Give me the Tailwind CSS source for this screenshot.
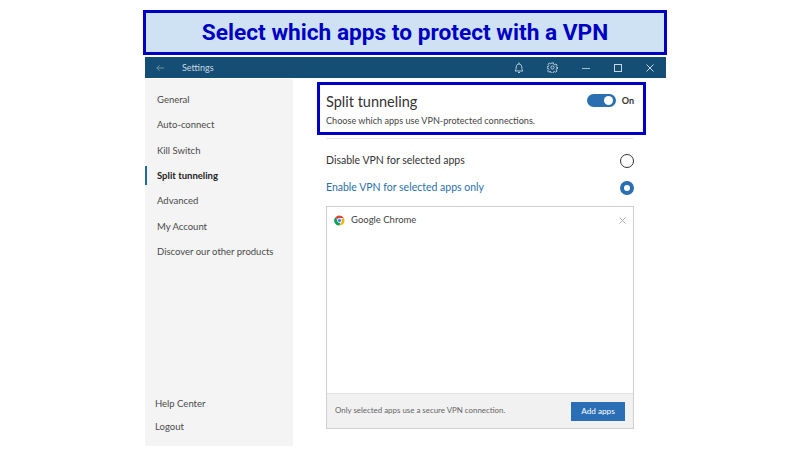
<!DOCTYPE html>
<html lang="en">
  <head>
    <meta charset="UTF-8" />
    <title>Split tunneling settings</title>
    <script src="https://cdn.jsdelivr.net/npm/@tailwindcss/browser@4"></script>
  </head>
  <body class="bg-white w-[806px] h-[453px] overflow-hidden font-['Lato',sans-serif]">
    <div class="w-[524px] ml-[143px] pt-[10px] pb-[2px]">
      <!-- Banner -->
      <div class="h-[45px] border-[3px] border-[#0000c4] bg-[#cfe2f3] pt-[1px] flex items-center justify-center font-['Roboto',sans-serif] font-bold text-[22.700px] text-[#0000c4]">
        Select which apps to protect with a VPN
      </div>
    </div>

    <div class="w-[521px] ml-[145px]">
      <!-- Title bar -->
      <div class="h-[21px] bg-[#154e74] flex items-center text-[#c9d8e2] pl-[11px]">
        <svg class="w-[8px] h-[8px]" viewBox="0 0 10 10" fill="none" stroke="#7fa3b9" stroke-width="1"><path d="M10 5H1M4.500 1.500 1 5l3.500 3.500" /></svg>
        <span class="ml-[18px] text-[9px]">Settings</span>
        <div class="ml-auto flex items-center">
          <svg class="w-[10px] h-[12px]" viewBox="0 0 10 12" fill="none" stroke="#c9d8e2" stroke-width="0.9"><path d="M1 9h8C8 8 7.800 7 7.800 5 7.800 3.300 6.600 2 5 2S2.200 3.300 2.200 5C2.200 7 2 8 1 9ZM4 10.500h2M5 .5V2" /></svg>
          <svg class="w-[11px] h-[11px] ml-[23px]" viewBox="0 0 24 24" fill="none" stroke="#c9d8e2" stroke-width="2"><circle cx="12" cy="12" r="3.500" /><path d="M10 2h4l.6 3 2.300 1 2.600-1.700 2.800 2.800L20 9.700l1 2.300 3 .6v-1.200 2.600l-3 .6-1 2.300 1.700 2.600-2.800 2.800-2.600-1.700-2.300 1-.6 3h-4l-.6-3-2.300-1-2.600 1.700-2.800-2.800L4 16.500l-1-2.300-3-.6v-3.200l3-.6 1-2.300-1.700-2.600 2.800-2.800 2.600 1.700 2.300-1z" /></svg>
          <svg class="w-[8px] h-[8px] ml-[24px]" viewBox="0 0 8 8" stroke="#a9c0cf"><path d="M0 4.500h8" /></svg>
          <svg class="w-[8px] h-[8px] ml-[24px]" viewBox="0 0 8 8" fill="none" stroke="#c9d8e2"><rect x=".5" y=".5" width="7" height="7" /></svg>
          <svg class="w-[8px] h-[8px] ml-[24px] mr-[12px]" viewBox="0 0 8 8" stroke="#c9d8e2"><path d="M.5.5l7 7M7.500.5l-7 7" /></svg>
        </div>
      </div>

      <div class="flex h-[368px]">
        <!-- Sidebar -->
        <aside class="w-[148px] mt-[1px] bg-[#f4f4f4] flex flex-col text-[9.500px] text-[#4a4a4a]">
          <nav class="pt-[8.500px] flex flex-col">
            <a class="h-[25.300px] pl-[12px] flex items-center">General</a>
            <a class="h-[25.300px] pl-[12px] flex items-center">Auto-connect</a>
            <a class="h-[25.300px] pl-[12px] flex items-center">Kill Switch</a>
            <a class="h-[25.300px] pl-[12px] flex items-center font-bold text-[#222] relative">
              <span class="absolute left-0 top-[3px] w-[2px] h-[19px] bg-[#1b6a99]"></span>
              Split tunneling
            </a>
            <a class="h-[25.300px] pl-[12px] flex items-center">Advanced</a>
            <a class="h-[25.300px] pl-[12px] flex items-center">My Account</a>
            <a class="h-[25.300px] pl-[12px] flex items-center">Discover our other products</a>
          </nav>
          <div class="mt-auto pb-[7px] flex flex-col">
            <a class="h-[23px] pl-[10px] flex items-center">Help Center</a>
            <a class="h-[23px] pl-[10px] flex items-center">Logout</a>
          </div>
        </aside>

        <!-- Main pane -->
        <main class="flex-1 pl-[24px] pr-[20px] relative">
          <div class="h-[53px] w-[329px] mt-[4px] border-[3px] border-[#0000c4] pl-[6px] pt-[7px] relative">
            <div class="text-[14.500px] leading-[20px] text-[#333]">Split tunneling</div>
            <div class="text-[9.100px] leading-[13px] mt-[2px] text-[#444]">Choose which apps use VPN-protected connections.</div>
            <div class="absolute top-[9px] right-[9px] flex items-center">
              <span class="w-[29px] h-[13px] rounded-full bg-[#2a6fb0] flex items-center justify-end pr-[3px]">
                <span class="w-[9px] h-[9px] rounded-full bg-white"></span>
              </span>
              <span class="ml-[6px] text-[9px] font-bold text-[#333]">On</span>
            </div>
          </div>

          <div class="ml-[9px] w-[307px] mt-[3px] border-t border-[#e4e4e4]"></div>

          <div class="ml-[9px] w-[308px] mt-[12px] h-[20px] flex items-center justify-between text-[10.500px] text-[#333]">
            <span>Disable VPN for selected apps</span>
            <span class="w-[14px] h-[14px] rounded-full border-[1.500px] border-[#333]"></span>
          </div>
          <div class="ml-[9px] w-[308px] mt-[7px] h-[20px] flex items-center justify-between text-[10.500px] text-[#2a6fa8]">
            <span>Enable VPN for selected apps only</span>
            <span class="w-[14px] h-[14px] rounded-full border-[4px] border-[#2a6fb0]"></span>
          </div>

          <!-- App list -->
          <div class="ml-[9px] w-[308px] h-[223px] mt-[8px] border border-[#cfcfcf] flex flex-col">
            <div class="flex-1 pl-[7px] pr-[7px] pt-[6px]">
              <div class="flex items-center h-[14px] text-[9.500px] text-[#444]">
                <svg class="w-[11px] h-[11px]" viewBox="0 0 24 24">
                  <path fill="#db4437" d="M12 1a11 11 0 0 1 9.500 5.500H12a5.500 5.500 0 0 0-5.200 3.700L3.200 4.700A11 11 0 0 1 12 1Z" />
                  <path fill="#f4b400" d="M21.500 6.500A11 11 0 0 1 12 23l4.700-8.200A5.500 5.500 0 0 0 16.500 8.500Z" />
                  <path fill="#0f9d58" d="M3.200 4.700 8 13a5.500 5.500 0 0 0 5.700 4.300L12 23A11 11 0 0 1 3.200 4.700Z" />
                  <circle cx="12" cy="12" r="4.500" fill="#4285f4" stroke="#fff" stroke-width="1.500" />
                </svg>
                <span class="ml-[6px]">Google Chrome</span>
                <svg class="w-[7px] h-[7px] ml-auto" viewBox="0 0 8 8" stroke="#aaa"><path d="M.5.5l7 7M7.500.5l-7 7" /></svg>
              </div>
            </div>
            <div class="h-[35px] bg-[#f1f1f1] border-t border-[#e2e2e2] flex items-center justify-between pl-[8px] pr-[8px] text-[7.900px] text-[#666]">
              <span>Only selected apps use a secure VPN connection.</span>
              <button class="w-[54px] h-[19px] bg-[#2a6fb5] text-white text-[8.200px]">Add apps</button>
            </div>
          </div>
        </main>
      </div>
    </div>
  </body>
</html>
